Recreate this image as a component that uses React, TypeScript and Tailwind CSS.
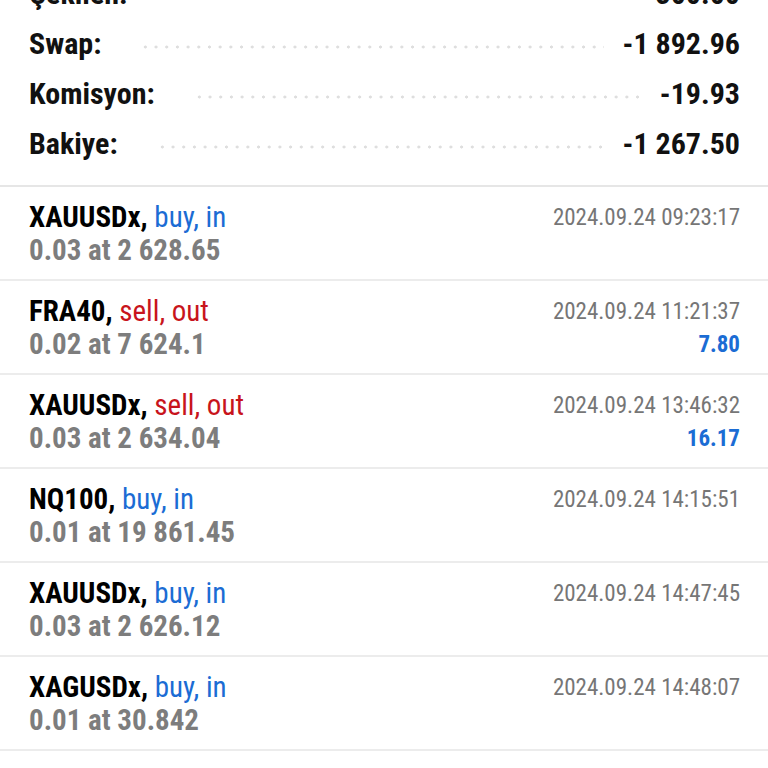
import React from "react";

type Deal = {
  symbol: string;
  side: string;
  kind: "buy" | "sell";
  detail: string;
  time: string;
  profit?: string;
};

const summary = [
  { label: "Çekilen:", value: "-300.00" },
  { label: "Swap:", value: "-1 892.96" },
  { label: "Komisyon:", value: "-19.93" },
  { label: "Bakiye:", value: "-1 267.50" },
];

const deals: Deal[] = [
  { symbol: "XAUUSDx", side: "buy, in", kind: "buy", detail: "0.03 at 2 628.65", time: "2024.09.24 09:23:17" },
  { symbol: "FRA40", side: "sell, out", kind: "sell", detail: "0.02 at 7 624.1", time: "2024.09.24 11:21:37", profit: "7.80" },
  { symbol: "XAUUSDx", side: "sell, out", kind: "sell", detail: "0.03 at 2 634.04", time: "2024.09.24 13:46:32", profit: "16.17" },
  { symbol: "NQ100", side: "buy, in", kind: "buy", detail: "0.01 at 19 861.45", time: "2024.09.24 14:15:51" },
  { symbol: "XAUUSDx", side: "buy, in", kind: "buy", detail: "0.03 at 2 626.12", time: "2024.09.24 14:47:45" },
  { symbol: "XAGUSDx", side: "buy, in", kind: "buy", detail: "0.01 at 30.842", time: "2024.09.24 14:48:07" },
  { symbol: "NQ100", side: "sell, out", kind: "sell", detail: "0.01 at 19 900.20", time: "2024.09.24 15:02:11", profit: "3.88" },
];

function DealRow({ deal }: { deal: Deal }) {
  return (
    <div className="flex justify-between border-b-2 border-[#ececec] pl-[29px] pr-[28px] pt-[14px] pb-[12px]">
      <div className="flex flex-col">
        <div className="text-[29px] leading-[33px]">
          <span className="font-bold text-black">{deal.symbol}, </span>
          <span className={deal.kind === "buy" ? "text-[#1b6cd4]" : "text-[#c8141c]"}>
            {deal.side}
          </span>
        </div>
        <div className="text-[29px] leading-[33px] font-bold text-[#7d7d7d]">{deal.detail}</div>
      </div>
      <div className="flex flex-col items-end">
        <div className="text-[23px] leading-[33px] text-[#767676]">{deal.time}</div>
        {deal.profit && (
          <div className="text-[23px] leading-[33px] font-bold text-[#1b6cd4]">{deal.profit}</div>
        )}
      </div>
    </div>
  );
}

export default function App() {
  return (
    <div
      className="h-[768px] w-[768px] overflow-hidden bg-white"
      style={{ fontFamily: '"Roboto Condensed", Roboto, "Liberation Sans", sans-serif', fontStretch: "condensed" }}
    >
      <div className="-mt-[32px] flex flex-col pb-[17px] border-b-2 border-[#e6e6e6]">
        {summary.map((row) => (
          <div key={row.label} className="flex h-[50px] items-center pl-[29px] pr-[28px]">
            <span className="font-bold text-[30px] text-[#111]">{row.label}</span>
            <span className="ml-[39px] mr-[19px] mt-[8px] h-[4px] flex-1 bg-[radial-gradient(circle,#dedede_1.3px,transparent_1.8px)] bg-[length:10.7px_4px]" />
            <span className="font-bold text-[30px] text-[#111]">{row.value}</span>
          </div>
        ))}
      </div>
      {deals.map((d, i) => (
        <DealRow key={i} deal={d} />
      ))}
    </div>
  );
}
